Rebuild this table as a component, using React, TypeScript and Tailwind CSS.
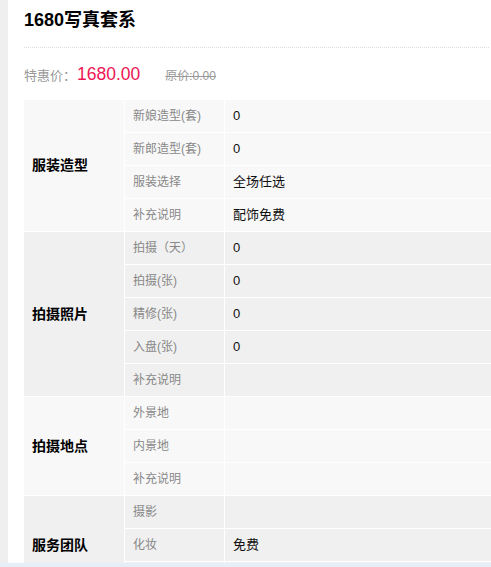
const sections = [
  {
    title: "服装造型",
    bg: "bg-[#f8f8f8]",
    rows: [
      ["新娘造型(套)", "0"],
      ["新郎造型(套)", "0"],
      ["服装选择", "全场任选"],
      ["补充说明", "配饰免费"],
    ],
  },
  {
    title: "拍摄照片",
    bg: "bg-[#f0f0f0]",
    rows: [
      ["拍摄（天）", "0"],
      ["拍摄(张)", "0"],
      ["精修(张)", "0"],
      ["入盘(张)", "0"],
      ["补充说明", ""],
    ],
  },
  {
    title: "拍摄地点",
    bg: "bg-[#f8f8f8]",
    rows: [
      ["外景地", ""],
      ["内景地", ""],
      ["补充说明", ""],
    ],
  },
  {
    title: "服务团队",
    bg: "bg-[#f0f0f0]",
    rows: [
      ["摄影", ""],
      ["化妆", "免费"],
      ["", ""],
    ],
  },
];

const font = "font-['Liberation_Sans','Noto_Sans_CJK_SC',sans-serif]";

export default function App() {
  return (
    <div className={`flex h-[567px] flex-col overflow-hidden bg-white ${font}`}>
      <div className="flex min-h-0 flex-1">
        <div className="w-[8px] shrink-0 bg-[#efefef]" />
        <div className="min-w-0 flex-1 pl-[16px]">
          <div className="mr-[2px] h-[48px] border-b border-dotted border-[#dddddd] pt-[9px]">
            <h1 className="text-[18px] font-bold leading-[22px] text-black">1680写真套系</h1>
          </div>
          <div className="flex h-[52px] items-baseline pt-[15px]">
            <span className="text-[13px] text-[#999999]">特惠价：</span>
            <span className="ml-[1px] text-[17.5px] leading-[22px] text-[#ee1555]">1680.00</span>
            <span className="ml-[25px] text-[12px] text-[#999999] line-through">原价:0.00</span>
          </div>
          <div className="flex flex-col">
            {sections.map((s) => (
              <div key={s.title} className={`flex ${s.bg}`}>
                <div className="flex w-[101px] shrink-0 items-center border-r border-b border-white pl-[8px] text-[14px] font-bold text-black">
                  {s.title}
                </div>
                <div className="flex flex-1 flex-col">
                  {s.rows.map(([k, v], i) => (
                    <div key={i} className="flex h-[33px] border-b border-white">
                      <div className="flex w-[100px] shrink-0 items-center border-r border-white pl-[8px] text-[12px] text-[#888888]">
                        {k}
                      </div>
                      <div className="flex flex-1 items-center pl-[8px] text-[13px] text-[#111111]">{v}</div>
                    </div>
                  ))}
                </div>
              </div>
            ))}
          </div>
        </div>
      </div>
      <div className="h-[4px] shrink-0 bg-[#e8eef5]" />
    </div>
  );
}
